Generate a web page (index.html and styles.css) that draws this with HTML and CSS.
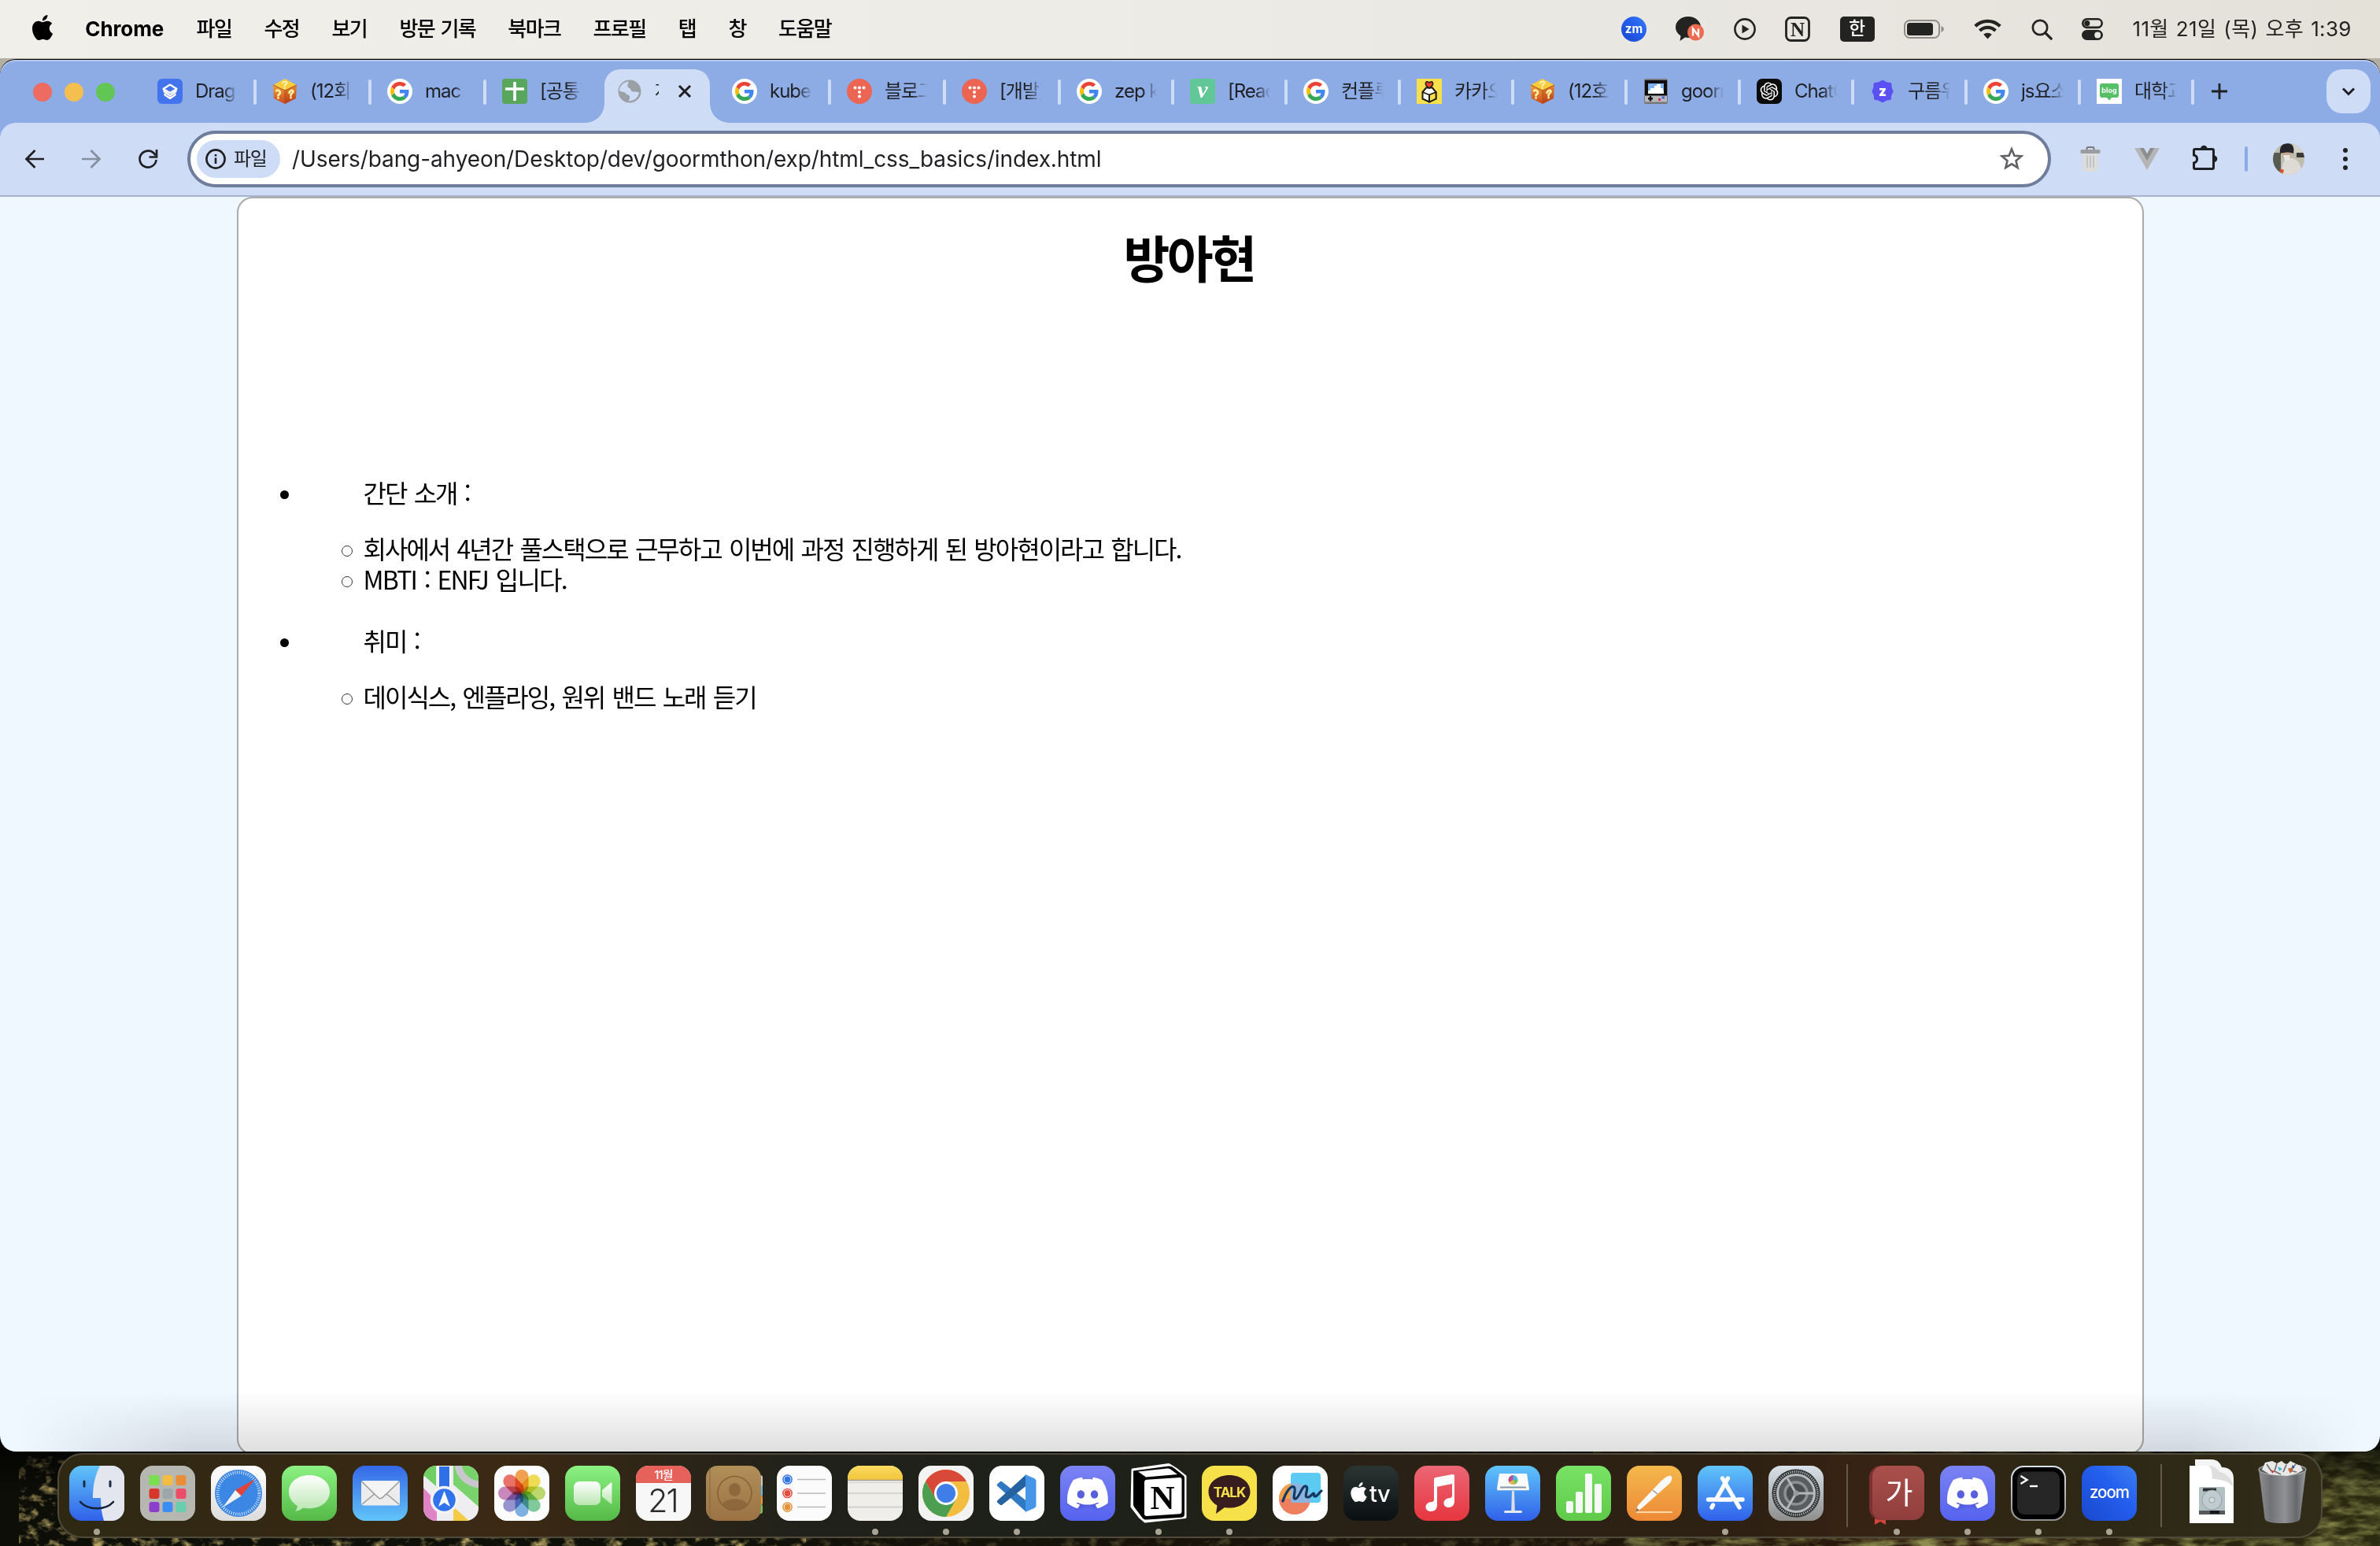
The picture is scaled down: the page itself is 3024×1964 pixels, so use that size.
FILE: index.html
```html
<!DOCTYPE html>
<html lang="ko">
<head>
<meta charset="utf-8">
<title>방아현</title>
<link rel="stylesheet" href="styles.css">
</head>
<body>
<svg class="defs" width="0" height="0" aria-hidden="true">
  <defs>
    <symbol id="apple" viewBox="0 0 24 24"><path d="M12.152 6.896c-.948 0-2.415-1.078-3.96-1.04-2.04.027-3.91 1.183-4.961 3.014-2.117 3.675-.546 9.103 1.519 12.09 1.013 1.454 2.208 3.09 3.792 3.039 1.52-.065 2.09-.987 3.935-.987 1.831 0 2.35.987 3.96.948 1.637-.026 2.676-1.48 3.676-2.948 1.156-1.688 1.636-3.325 1.662-3.415-.039-.013-3.182-1.221-3.22-4.857-.026-3.04 2.48-4.494 2.597-4.559-1.429-2.09-3.623-2.324-4.39-2.376-2-.156-3.675 1.09-4.61 1.09zM15.53 3.83c.843-1.012 1.4-2.427 1.245-3.83-1.207.052-2.662.805-3.532 1.818-.78.896-1.454 2.338-1.273 3.714 1.338.104 2.715-.688 3.559-1.701"/></symbol>
    <symbol id="google" viewBox="0 0 32 32">
      <circle cx="16" cy="16" r="16" fill="#fff"/>
      <g transform="translate(4 4) scale(.5)">
        <path fill="#EA4335" d="M24 9.5c3.54 0 6.71 1.22 9.21 3.6l6.85-6.85C35.9 2.38 30.47 0 24 0 14.62 0 6.51 5.38 2.56 13.22l7.98 6.19C12.43 13.72 17.74 9.5 24 9.5z"/>
        <path fill="#4285F4" d="M46.98 24.55c0-1.57-.15-3.09-.38-4.55H24v9.02h12.94c-.58 2.96-2.26 5.48-4.78 7.18l7.73 6c4.51-4.18 7.09-10.36 7.09-17.65z"/>
        <path fill="#FBBC05" d="M10.53 28.59c-.48-1.45-.76-2.99-.76-4.59s.27-3.14.76-4.59l-7.98-6.19C.92 16.46 0 20.12 0 24c0 3.88.92 7.54 2.56 10.78l7.97-6.19z"/>
        <path fill="#34A853" d="M24 48c6.48 0 11.93-2.13 15.89-5.81l-7.73-6c-2.15 1.45-4.92 2.3-8.16 2.3-6.26 0-11.57-4.22-13.47-9.91l-7.98 6.19C6.51 42.62 14.62 48 24 48z"/>
      </g>
    </symbol>
    <linearGradient id="gCubeL" x1="0" y1="0" x2="0" y2="1"><stop offset="0" stop-color="#f3a23a"/><stop offset="1" stop-color="#c9471c"/></linearGradient>
    <linearGradient id="gCubeR" x1="0" y1="0" x2="0" y2="1"><stop offset="0" stop-color="#e98530"/><stop offset="1" stop-color="#b63a16"/></linearGradient>
    <symbol id="cube" viewBox="0 0 32 32">
      <path d="M16 0 31 8 16 15 1 8z" fill="#f9cb3d"/>
      <path d="M1 8 16 15V32L2 25z" fill="url(#gCubeL)"/>
      <path d="M31 8 16 15V32L30 25z" fill="url(#gCubeR)"/>
      <path d="M1 8 16 15 31 8M16 15V31" stroke="#a8521c" stroke-width="1" fill="none"/>
      <path d="M13 5.500c1-2.500 6-2.500 5.500 0-.5 1.700-2.800 1.600-2.800 3.500M15.500 11.500v.5" stroke="#fff8c0" stroke-width="1.900" fill="none" stroke-linecap="round"/>
      <path d="M5 15.500c1.500-2 5-.5 5 2.300 0 2-2.500 1.500-2.500 3.700M7.500 24.300v.5M21.500 18c.5-3 5-4.500 5-1.800 0 2-3 2.500-3 5M23.500 23.800v.5" stroke="#fff6a8" stroke-width="2.600" fill="none" stroke-linecap="round"/>
    </symbol>
    <symbol id="tdots" viewBox="0 0 32 32">
      <circle cx="16" cy="16" r="16" fill="#ec6552"/>
      <g fill="#fff"><circle cx="10.500" cy="11.500" r="2"/><circle cx="16" cy="11.500" r="2"/><circle cx="21.500" cy="11.500" r="2"/><circle cx="16" cy="17" r="2"/><circle cx="16" cy="22.500" r="2"/></g>
    </symbol>
    <linearGradient id="gDiscord" x1="0" y1="0" x2="0" y2="1"><stop offset="0" stop-color="#7b83f3"/><stop offset="1" stop-color="#5562ee"/></linearGradient>
    <symbol id="discord" viewBox="0 0 70 70">
      <rect width="70" height="70" rx="16" fill="url(#gDiscord)"/>
      <path transform="translate(9 10.500) scale(2.160 2.050)" fill="#3a41b8" opacity=".35" d="M4 4.500 20 4.500 24 18.500 18 22 12 20 6 22 0 18.500z" filter="url(#soft)"/>
      <path transform="translate(9 8.500) scale(2.160)" fill="#fff" d="M20.317 4.3698a19.7913 19.7913 0 00-4.8851-1.5152.0741.0741 0 00-.0785.0371c-.211.3753-.4447.8648-.6083 1.2495-1.8447-.2762-3.68-.2762-5.4868 0-.1636-.3933-.4058-.8742-.6177-1.2495a.077.077 0 00-.0785-.037 19.7363 19.7363 0 00-4.8852 1.515.0699.0699 0 00-.0321.0277C.5334 9.0458-.319 13.5799.0992 18.0578a.0824.0824 0 00.0312.0561c2.0528 1.5076 4.0413 2.4228 5.9929 3.0294a.0777.0777 0 00.0842-.0276c.4616-.6304.8731-1.2952 1.226-1.9942a.076.076 0 00-.0416-.1057c-.6528-.2476-1.2743-.5495-1.8722-.8923a.077.077 0 01-.0076-.1277c.1258-.0943.2517-.1923.3718-.2914a.0743.0743 0 01.0776-.0105c3.9278 1.7933 8.18 1.7933 12.0614 0a.0739.0739 0 01.0785.0095c.1202.099.246.1981.3728.2924a.077.077 0 01-.0066.1276 12.2986 12.2986 0 01-1.873.8914.0766.0766 0 00-.0407.1067c.3604.698.7719 1.3628 1.225 1.9932a.076.076 0 00.0842.0286c1.961-.6067 3.9495-1.5219 6.0023-3.0294a.077.077 0 00.0313-.0552c.5004-5.177-.8382-9.6739-3.5485-13.6604a.061.061 0 00-.0312-.0286zM8.02 15.3312c-1.1825 0-2.1569-1.0857-2.1569-2.419 0-1.3332.9555-2.4189 2.157-2.4189 1.2108 0 2.1757 1.0952 2.1568 2.419 0 1.3332-.9555 2.4189-2.1569 2.4189zm7.9748 0c-1.1825 0-2.1569-1.0857-2.1569-2.419 0-1.3332.9554-2.4189 2.1569-2.4189 1.2108 0 2.1757 1.0952 2.1568 2.419 0 1.3332-.946 2.4189-2.1568 2.4189Z"/>
    </symbol>
    <filter id="soft" x="-20%" y="-20%" width="140%" height="140%"><feGaussianBlur stdDeviation=".8"/></filter>
    <filter id="foliage" x="0" y="0" width="100%" height="100%">
      <feTurbulence type="fractalNoise" baseFrequency=".06 .09" numOctaves="5" seed="8"/>
      <feColorMatrix values="0 0 0 0 .46  0 0 0 0 .36  0 0 0 0 .12  2.600 1.200 0 0 -1.900"/>
    </filter>
    <filter id="grass" x="0" y="0" width="100%" height="100%">
      <feTurbulence type="fractalNoise" baseFrequency=".03 .09" numOctaves="5" seed="21"/>
      <feColorMatrix values="0 0 0 0 .34  0 0 0 0 .35  0 0 0 0 .1  1.800 1.200 0 0 -1.200"/>
    </filter>
    <linearGradient id="gBlueV" x1="0" y1="0" x2="0" y2="1"><stop offset="0" stop-color="#61c5f9"/><stop offset="1" stop-color="#2f60ea"/></linearGradient>
    <linearGradient id="gMail" x1="0" y1="0" x2="0" y2="1"><stop offset="0" stop-color="#3568e8"/><stop offset="1" stop-color="#62c4f8"/></linearGradient>
    <linearGradient id="gGreen" x1="0" y1="0" x2="0" y2="1"><stop offset="0" stop-color="#8bf283"/><stop offset="1" stop-color="#54b946"/></linearGradient>
    <linearGradient id="gWhite" x1="0" y1="0" x2="0" y2="1"><stop offset="0" stop-color="#fff"/><stop offset="1" stop-color="#dcdcdc"/></linearGradient>
    <linearGradient id="gBubble" x1="0" y1="0" x2="0" y2="1"><stop offset="0" stop-color="#fff"/><stop offset="1" stop-color="#b9e6b0"/></linearGradient>
    <linearGradient id="gRed" x1="0" y1="0" x2="0" y2="1"><stop offset="0" stop-color="#ec6675"/><stop offset="1" stop-color="#e6363f"/></linearGradient>
    <linearGradient id="gOrange" x1="0" y1="0" x2="0" y2="1"><stop offset="0" stop-color="#f4b84c"/><stop offset="1" stop-color="#ed8936"/></linearGradient>
    <linearGradient id="gTv" x1="0" y1="0" x2="0" y2="1"><stop offset="0" stop-color="#2a3532"/><stop offset="1" stop-color="#0a0f12"/></linearGradient>
    <linearGradient id="gGrey" x1="0" y1="0" x2="0" y2="1"><stop offset="0" stop-color="#d9e2e9"/><stop offset="1" stop-color="#8e8e8c"/></linearGradient>
    <linearGradient id="gNotes" x1="0" y1="0" x2="0" y2="1"><stop offset="0" stop-color="#fadb5f"/><stop offset="1" stop-color="#f3c33b"/></linearGradient>
    <linearGradient id="gBrown" x1="0" y1="0" x2="0" y2="1"><stop offset="0" stop-color="#b08f58"/><stop offset="1" stop-color="#9c7245"/></linearGradient>
    <linearGradient id="gZoom" x1="1" y1="0" x2="0" y2="1"><stop offset="0" stop-color="#3c80f0"/><stop offset=".4" stop-color="#2460ef"/><stop offset="1" stop-color="#1a47cc"/></linearGradient>
    <linearGradient id="gDict" x1="0" y1="0" x2="0" y2="1"><stop offset="0" stop-color="#a9504c"/><stop offset="1" stop-color="#903e3d"/></linearGradient>
    <linearGradient id="gBin" x1="0" y1="0" x2="1" y2="0"><stop offset="0" stop-color="#8c8e91"/><stop offset=".25" stop-color="#707275"/><stop offset=".55" stop-color="#8f9194"/><stop offset=".8" stop-color="#66686b"/><stop offset="1" stop-color="#9b9da0"/></linearGradient>
    <clipPath id="tile"><rect width="70" height="70" rx="16"/></clipPath>
  </defs>
</svg>

<div class="desktop">
  <svg class="wallpaper" viewBox="0 0 3024 164" width="3024" height="164" aria-hidden="true">
    <defs>
      <linearGradient id="ground" x1="0" x2="1"><stop offset="0" stop-color="#0d0e08"/><stop offset=".25" stop-color="#0f1109"/><stop offset=".6" stop-color="#1b140b"/><stop offset=".82" stop-color="#2d1b0e"/><stop offset="1" stop-color="#2a2b11"/></linearGradient>
      <linearGradient id="fade" x1="0" y1="0" x2="0" y2="1"><stop offset="0" stop-color="#000"/><stop offset=".27" stop-color="#000" stop-opacity=".85"/><stop offset="1" stop-color="#000" stop-opacity="0"/></linearGradient>
    </defs>
    <rect width="3024" height="164" fill="url(#ground)"/>
    <rect x="24" y="50" width="1000" height="114" filter="url(#foliage)"/>
    <rect x="1024" width="1000" height="164" filter="url(#foliage)" opacity=".3"/>
    <rect x="2024" width="1000" height="164" filter="url(#grass)" opacity=".85"/>
    <rect width="3024" height="100" fill="url(#fade)"/>
  </svg>

  <header class="menubar">
    <nav class="menus">
      <svg class="apple-logo"><use href="#apple"/></svg>
      <span class="app-name">Chrome</span>
      <span>파일</span><span>수정</span><span>보기</span><span>방문 기록</span><span>북마크</span><span>프로필</span><span>탭</span><span>창</span><span>도움말</span>
    </nav>
    <div class="status">
      <svg width="32" height="32" viewBox="0 0 32 32"><circle cx="16" cy="16" r="16" fill="url(#gZoom)"/><text x="16" y="20.500" text-anchor="middle" class="t-zm">zm</text></svg>
      <svg width="36" height="32" viewBox="0 0 36 32"><path d="M16 0C7 0 0 6 0 13.500 0 18 2.500 22 6.500 24.500L5.500 31l6.500-4.500c1.300.3 2.600.4 4 .4 9 0 16-6 16-13.400S25 0 16 0z" fill="#232321"/><circle cx="25.500" cy="20" r="10.500" fill="#ec6a50"/><path d="M22 24.500v-9l7 9v-9" fill="none" stroke="#fff" stroke-width="2.400"/></svg>
      <svg width="28" height="28" viewBox="0 0 28 28"><circle cx="14" cy="14" r="12.600" fill="none" stroke="#232321" stroke-width="2.600"/><path d="M10.500 8.500v11l9-5.500z" fill="#232321"/></svg>
      <svg width="32" height="32" viewBox="0 0 32 32"><rect x="1.500" y="1.500" width="29" height="29" rx="6" fill="none" stroke="#232321" stroke-width="2.800"/><text x="16" y="24.500" text-anchor="middle" class="t-n">N</text></svg>
      <span class="ime">한</span>
      <svg width="52" height="24" viewBox="0 0 52 24"><rect x="1" y="1" width="44" height="22" rx="6.500" fill="none" stroke="#8d8c88" stroke-width="2"/><rect x="4" y="4" width="33" height="16" rx="3.500" fill="#232321"/><path d="M47.500 8v8c2-.8 3.300-2.200 3.300-4s-1.300-3.200-3.300-4z" fill="#8d8c88"/></svg>
      <svg width="35" height="26" viewBox="0 0 35 26"><g fill="none" stroke="#232321" stroke-width="4.200"><path d="M1.800 9.300a22.300 22.300 0 0 1 31.400 0"/><path d="M7.500 15a14.300 14.300 0 0 1 20 0"/></g><path d="M17.500 25.500l-5.300-5.700a7.600 7.600 0 0 1 10.600 0z" fill="#232321"/></svg>
      <svg width="27" height="27" viewBox="0 0 27 27"><circle cx="11" cy="11" r="9.200" fill="none" stroke="#232321" stroke-width="2.700"/><path d="M17.800 17.800l7.400 7.400" stroke="#232321" stroke-width="3.300" stroke-linecap="round"/></svg>
      <svg width="27" height="28" viewBox="0 0 27 28"><rect x="1.300" y="1.300" width="24.400" height="10.600" rx="5.300" fill="none" stroke="#232321" stroke-width="2.600"/><circle cx="6.800" cy="6.600" r="3.600" fill="#232321"/><rect y="15" width="27" height="13" rx="6.500" fill="#232321"/><circle cx="20.200" cy="21.500" r="4" fill="#e7e5df"/></svg>
      <span class="clock">11월 21일 (목) 오후 1:39</span>
    </div>
  </header>

  <section class="window">
    <div class="tabstrip">
      <div class="lights"><i class="red"></i><i class="yellow"></i><i class="green"></i></div>
      <div class="tab wide"><svg viewBox="0 0 32 32"><rect width="32" height="32" rx="6" fill="#4474ed"/><path d="M8.500 11.500v4.500l7.500 5.500 7.500-5.500v-4.500" fill="none" stroke="#fff" stroke-width="2.200" stroke-linejoin="round"/><path d="M16 7.500l8.500 5.500-8.500 5-8.500-5zM9.500 18.500v2l6.500 4.500 6.500-4.500v-2" fill="none" stroke="#fff" stroke-width="2.200" stroke-linejoin="round"/></svg><span>Drag</span></div>
      <div class="tab wide"><svg><use href="#cube"/></svg><span>(12회</span></div>
      <div class="tab wide"><svg><use href="#google"/></svg><span>mac</span></div>
      <div class="tab wide last"><svg viewBox="0 0 32 32"><rect width="32" height="32" rx="4" fill="#58a55c"/><path d="M16 4v24M4 13h24" stroke="#fff" stroke-width="3.600"/></svg><span>[공통]</span></div>
      <div class="tab wide active">
        <svg class="globe" viewBox="0 0 30 30"><circle cx="15" cy="15" r="14.500" fill="#9aa0a6"/><path d="M14 2.500c-1 3-2 4-1.500 6.500.5 2 3.500 1.500 4 4 .3 2 2 2.500 4 2.500 2.500 0 5 1 6.500.5-.5 4-3 8-6 9.500-3 1.500-6 2-7.500 1.500 1-2 2-3 1.500-5.500s-3.500-1.500-4.500-3.500-3.500-2-5.500-2.500l-3-1C2 10 5 3.500 14 2.500z" fill="#cfdcf5"/><path d="M17 1.500c4 .5 9 4 10.500 9-2 1.500-5 2-7 1s-1-3-2.500-4.500S16 4 17 1.500z" fill="#9aa0a6"/></svg>
        <span>자기</span>
        <svg class="close" viewBox="0 0 18 18"><path d="M2 2l14 14M16 2L2 16" stroke="#1f2023" stroke-width="3"/></svg>
      </div>
      <div class="tab wide"><svg><use href="#google"/></svg><span>kube</span></div>
      <div class="tab wide"><svg><use href="#tdots"/></svg><span>블로그</span></div>
      <div class="tab wide"><svg><use href="#tdots"/></svg><span>[개발]</span></div>
      <div class="tab"><svg><use href="#google"/></svg><span>zep ki</span></div>
      <div class="tab"><svg viewBox="0 0 32 32"><rect width="32" height="32" rx="4" fill="#62c797"/><text x="16" y="24" text-anchor="middle" class="t-v">v</text></svg><span>[Reac</span></div>
      <div class="tab"><svg><use href="#google"/></svg><span>컨플루</span></div>
      <div class="tab"><svg viewBox="0 0 32 32"><rect width="32" height="32" fill="#f7e04b"/><path d="M7.500 17 12 11.500h8L24.500 17v8.500L16 29.500l-8.500-4z" fill="#fff" stroke="#1d1a12" stroke-width="2"/><path d="M16 20.500l8.500-3.500v8.500l-8.500 4z" fill="#f7e04b" stroke="#1d1a12" stroke-width="1.800"/><path d="M7.500 17l8.500 3.500v9" fill="none" stroke="#1d1a12" stroke-width="1.800"/><path d="M16 12c-8-5-4-11 0-7 4-4 8 2 0 7z" fill="#e8452c" stroke="#1d1a12" stroke-width="1.500"/></svg><span>카카오</span></div>
      <div class="tab"><svg><use href="#cube"/></svg><span>(12호</span></div>
      <div class="tab"><svg viewBox="0 0 32 32"><rect x="1" y="0" width="30" height="32" rx="2" fill="#77777a"/><rect x="2" y="2" width="28" height="23" fill="#0d0d0f"/><rect x="6" y="6" width="20" height="13" fill="#7db3f5"/><path d="M6 19v-4h3v-3h5V9h3V7h5v5h3v3h1v4z" fill="#fff"/><rect x="2" y="21.500" width="28" height="8" fill="#b8b8bb"/><path d="M9 22v6.500M6 25.200h6" stroke="#111" stroke-width="2.400"/><rect x="19" y="25" width="3" height="3" fill="#d0306a"/><rect x="23.500" y="22.500" width="3.500" height="3" fill="#4668d8"/></svg><span>goorm</span></div>
      <div class="tab"><svg viewBox="0 0 32 32"><rect width="32" height="32" rx="7" fill="#0b0b0b"/><path transform="translate(4.600 4.600) scale(.95)" fill="#fff" d="M22.2819 9.8211a5.9847 5.9847 0 0 0-.5157-4.9108 6.0462 6.0462 0 0 0-6.5098-2.9A6.0651 6.0651 0 0 0 4.9807 4.1818a5.9847 5.9847 0 0 0-3.9977 2.9 6.0462 6.0462 0 0 0 .7427 7.0966 5.98 5.98 0 0 0 .511 4.9107 6.051 6.051 0 0 0 6.5146 2.9001A5.9847 5.9847 0 0 0 13.2599 24a6.0557 6.0557 0 0 0 5.7718-4.2058 5.9894 5.9894 0 0 0 3.9977-2.9001 6.0557 6.0557 0 0 0-.7475-7.0729zm-9.022 12.6081a4.4755 4.4755 0 0 1-2.8764-1.0408l.1419-.0804 4.7783-2.7582a.7948.7948 0 0 0 .3927-.6813v-6.7369l2.02 1.1686a.071.071 0 0 1 .038.052v5.5826a4.504 4.504 0 0 1-4.4945 4.4944zm-9.6607-4.1254a4.4708 4.4708 0 0 1-.5346-3.0137l.142.0852 4.783 2.7582a.7712.7712 0 0 0 .7806 0l5.8428-3.3685v2.3324a.0804.0804 0 0 1-.0332.0615L9.74 19.9502a4.4992 4.4992 0 0 1-6.1408-1.6464zM2.3408 7.8956a4.485 4.485 0 0 1 2.3655-1.9728V11.6a.7664.7664 0 0 0 .3879.6765l5.8144 3.3543-2.0201 1.1685a.0757.0757 0 0 1-.071 0l-4.8303-2.7865A4.504 4.504 0 0 1 2.3408 7.872zm16.5963 3.8558L13.1038 8.364 15.1192 7.2a.0757.0757 0 0 1 .071 0l4.8303 2.7913a4.4944 4.4944 0 0 1-.6765 8.1042v-5.6772a.79.79 0 0 0-.407-.667zm2.0107-3.0231l-.142-.0852-4.7735-2.7818a.7759.7759 0 0 0-.7854 0L9.409 9.2297V6.8974a.0662.0662 0 0 1 .0284-.0615l4.8303-2.7866a4.4992 4.4992 0 0 1 6.6802 4.66zM8.3065 12.863l-2.02-1.1638a.0804.0804 0 0 1-.038-.0567V6.0742a4.4992 4.4992 0 0 1 7.3757-3.4537l-.142.0805L8.704 5.459a.7948.7948 0 0 0-.3927.6813zm1.0976-2.3654l2.602-1.4998 2.6069 1.4998v2.9994l-2.5974 1.4997-2.6067-1.4997Z"/></svg><span>ChatG</span></div>
      <div class="tab"><svg viewBox="0 0 32 32"><path d="M16 2.500l5 2.500 5.500 1 .5 5.500 1.800 5-2.300 4.500-.5 5-5.500 1L16 29.500 11 27l-5-1-.5-5L3.200 16.500 5 11.500 5.500 6 11 5z" fill="#5b50f2" stroke="#5b50f2" stroke-width="1.500" stroke-linejoin="round"/><text x="16" y="21.500" text-anchor="middle" class="t-z">z</text></svg><span>구름위</span></div>
      <div class="tab"><svg><use href="#google"/></svg><span>js요소</span></div>
      <div class="tab"><svg viewBox="0 0 32 32"><rect width="32" height="32" fill="#fff"/><rect x="4" y="6" width="24" height="18" rx="3" fill="#57bf66"/><path d="M12 23h8l-4 4.500z" fill="#57bf66"/><text x="16" y="18" text-anchor="middle" class="t-blog">blog</text></svg><span>대학교</span></div>
      <svg class="plus" viewBox="0 0 20 20"><path d="M10 0v20M0 10h20" stroke="#1f2023" stroke-width="2.800"/></svg>
      <span class="tab-search"><svg width="16" height="11" viewBox="0 0 16 11"><path d="M1 1.500l7 7 7-7" fill="none" stroke="#1f2023" stroke-width="3"/></svg></span>
    </div>

    <div class="toolbar">
      <svg class="ic-back" width="26" height="26" viewBox="0 0 26 26"><path d="M25 13H3M13.500 2L2.500 13l11 11" fill="none" stroke="#1f2023" stroke-width="2.700"/></svg>
      <svg class="ic-fwd" width="26" height="26" viewBox="0 0 26 26"><path d="M1 13h22M12.500 2l11 11-11 11" fill="none" stroke="#868e9f" stroke-width="2.700"/></svg>
      <svg class="ic-reload" width="26" height="26" viewBox="0 0 26 26"><path d="M22.500 8.500A10.500 10.500 0 1 0 23.500 14" fill="none" stroke="#1f2023" stroke-width="2.700"/><path d="M24 1v9.500h-9.500" fill="none" stroke="#1f2023" stroke-width="2.700"/></svg>
      <div class="omnibox">
        <span class="chip"><svg width="26" height="26" viewBox="0 0 26 26"><circle cx="13" cy="13" r="11.600" fill="none" stroke="#1f2023" stroke-width="2.600"/><path d="M13 11.500v7.500M13 7v2.600" stroke="#1f2023" stroke-width="2.600"/></svg>파일</span>
        <span class="url">/Users/bang-ahyeon/Desktop/dev/goormthon/exp/html_css_basics/index.html</span>
        <svg class="star" width="32" height="32" viewBox="0 0 32 32"><path d="M16 3.500l3.400 8.200 8.900.7-6.800 5.800 2.100 8.700L16 22.300l-7.600 4.600 2.100-8.700-6.800-5.800 8.900-.7z" fill="none" stroke="#5f6063" stroke-width="2.600"/></svg>
      </div>
      <div class="extensions">
        <svg width="28" height="32" viewBox="0 0 28 32"><path d="M9.500 5V2.500C9.500 1.500 10 1 11 1h6c1 0 1.500.5 1.500 1.500V5" fill="none" stroke="#77797c" stroke-width="2"/><rect x="1.500" y="4" width="25" height="5" rx="1.500" fill="#9c9da0"/><path d="M4 9h20l-1 21c0 1.200-.8 2-2 2H7c-1.200 0-2-.8-2-2z" fill="#dcdcdc"/><path d="M10 12v15M14 12v15M18 12v15" stroke="#bdbdbd" stroke-width="1.500"/></svg>
        <svg class="ext-v" width="32" height="28" viewBox="0 0 32 28"><path d="M0 0h6.500L16 16.500 25.500 0H32L16 28z" fill="#b5b5b5"/><path d="M6.500 0H12l4 7 4-7h5.500L16 16.500z" fill="#8e8e8e"/></svg>
        <svg class="ext-puzzle" width="34" height="34" viewBox="0 0 34 34"><path d="M3.500 8c0-1 .7-1.500 1.500-1.500h22c1 0 1.500.6 1.500 1.500v22c0 1-.6 1.500-1.500 1.500H5c-.9 0-1.500-.6-1.500-1.500v-6c5.500-1.500 5.500-8.500 0-10z" fill="none" stroke="#1f2023" stroke-width="3"/><path d="M12 6a4.300 4.300 0 0 1 8.600 0zM29 14.500a4.300 4.300 0 0 1 0 8.600z" fill="#1f2023"/></svg>
        <i class="divider"></i>
        <svg class="avatar" width="40" height="40" viewBox="0 0 40 40"><defs><clipPath id="av"><circle cx="20" cy="20" r="20"/></clipPath></defs><g clip-path="url(#av)"><rect width="40" height="40" fill="#bfbdb0"/><rect y="12" width="10" height="28" fill="#565a50"/><rect x="26" width="14" height="12" fill="#d3d2c8"/><path d="M30 12h10v6H30z" fill="#3a3b38"/><path d="M12 40c-2-10 0-18 8-21 9-2 17 6 16 21z" fill="#dedbd6"/><ellipse cx="17.500" cy="15" rx="5.500" ry="7" fill="#c9a78e"/><path d="M9 13C8 4 12 0 18 0c6 0 10 4 8 13-5-2-9-2-17 0z" fill="#25242b"/><path d="M13 15l9 0-1 7-6 0z" fill="#e6e5e1"/><path d="M9 32l5 2-2 6H8z" fill="#d2552c"/></g></svg>
        <svg class="dots" width="6" height="28" viewBox="0 0 6 28"><g fill="#1f2023"><circle cx="3" cy="3" r="3"/><circle cx="3" cy="14" r="3"/><circle cx="3" cy="25" r="3"/></g></svg>
      </div>
    </div>

    <main class="page">
      <article class="card">
        <h1>방아현</h1>
        <ul class="outer">
          <li>
            <p>간단 소개 :</p>
            <ul class="inner">
              <li>회사에서 4년간 풀스택으로 근무하고 이번에 과정 진행하게 된 방아현이라고 합니다.</li>
              <li class="mbti">MBTI : ENFJ 입니다.</li>
            </ul>
          </li>
          <li>
            <p>취미 :</p>
            <ul class="inner">
              <li>데이식스, 엔플라잉, 원위 밴드 노래 듣기</li>
            </ul>
          </li>
        </ul>
      </article>
      <div class="dock-shade"></div>
    </main>
  </section>

  <footer class="dock">
    <div class="app on"><svg viewBox="0 0 70 70"><g clip-path="url(#tile)"><rect width="70" height="70" fill="url(#gBlueV)"/><path d="M39 0C32 14 30 26 30 41h10c0 10 1 20 4 29h26V0z" fill="#e3e6ee"/><path d="M19 20v6M52 20v6" stroke="#1b2b46" stroke-width="3" stroke-linecap="round"/><path d="M14 46c10 11 32 11 42 0" fill="none" stroke="#142038" stroke-width="2.600" stroke-linecap="round"/></g></svg></div>
    <div class="app"><svg viewBox="0 0 70 70"><rect width="70" height="70" rx="16" fill="#b7b7b2"/><g><rect x="11.500" y="12" width="13" height="13" rx="3" fill="#7ade4e"/><rect x="28.500" y="12" width="13" height="13" rx="3" fill="#f4bd41"/><rect x="45.500" y="12" width="13" height="13" rx="3" fill="#ea8d36"/><rect x="11.500" y="29" width="13" height="13" rx="3" fill="#d6362c"/><rect x="28.500" y="29" width="13" height="13" rx="3" fill="#9da6a9"/><rect x="45.500" y="29" width="13" height="13" rx="3" fill="#ec4d67"/><rect x="11.500" y="46" width="13" height="13" rx="3" fill="#8c3fcd"/><rect x="28.500" y="46" width="13" height="13" rx="3" fill="#3b8df3"/><rect x="45.500" y="46" width="13" height="13" rx="3" fill="#67cfae"/></g></svg></div>
    <div class="app"><svg viewBox="0 0 70 70"><rect width="70" height="70" rx="16" fill="url(#gWhite)"/><circle cx="35" cy="35" r="30" fill="#3c86e4"/><circle cx="35" cy="35" r="26.500" fill="none" stroke="#cfe3fa" stroke-width="4" stroke-dasharray="1 1.775"/><path d="M56 17 38.500 38.500 31 31z" fill="#e0433a"/><path d="M15 53 31 31l7.500 7.500z" fill="#f2f2f2"/></svg></div>
    <div class="app"><svg viewBox="0 0 70 70"><rect width="70" height="70" rx="16" fill="url(#gGreen)"/><path d="M35 12c-15 0-26 9-26 21 0 7.500 4 14 11 18-.4 3-1.500 5-3 7 4-.6 7.500-2.200 10-4.500 2.500.6 5 .8 8 .8 15 0 26-9.300 26-21.300S50 12 35 12z" fill="url(#gBubble)"/></svg></div>
    <div class="app"><svg viewBox="0 0 70 70"><rect width="70" height="70" rx="16" fill="url(#gMail)"/><rect x="11" y="19" width="49" height="31.500" rx="3" fill="#ececec"/><path d="M12 49 30 34M59 49 41 34" stroke="#9c9c9c" stroke-width="1.600"/><path d="M12 20.500 32 40c2 2 4.500 2 6.500 0L59 20.500" fill="#f5f5f5" stroke="#9c9c9c" stroke-width="1.700"/></svg></div>
    <div class="app"><svg viewBox="0 0 70 70"><g clip-path="url(#tile)"><rect width="70" height="70" fill="#eeeef0"/><path d="M0 12V0h16v26z" fill="#6fcf62"/><path d="M38 0h32v52L38 24z" fill="#79d26b"/><path d="M0 28 17 46v24H0z" fill="#dd83c6"/><path d="M38 70V52l20 18z" fill="#f4cb45"/><path d="M44-4c0 15 12 28 30 28" fill="none" stroke="#c7c7cd" stroke-width="9"/><path d="M19 0h15v40H19z" fill="#2f6fe8" stroke="#fff" stroke-width="2"/><circle cx="26.500" cy="43.500" r="16" fill="#3173ec" stroke="#f3f3f5" stroke-width="3.500"/><path d="M26.500 32 34 52l-7.500-5-7.500 5z" fill="#fff"/></g></svg></div>
    <div class="app"><svg viewBox="0 0 70 70"><rect width="70" height="70" rx="16" fill="#fcfcfc"/><g class="petals"><rect x="26.500" y="5" width="17" height="30" rx="8.500" fill="#f3973a"/><rect x="26.500" y="5" width="17" height="30" rx="8.500" fill="#efdc3c" transform="rotate(45 35 35)"/><rect x="26.500" y="5" width="17" height="30" rx="8.500" fill="#b5d65a" transform="rotate(90 35 35)"/><rect x="26.500" y="5" width="17" height="30" rx="8.500" fill="#6fc58e" transform="rotate(135 35 35)"/><rect x="26.500" y="5" width="17" height="30" rx="8.500" fill="#6aa7df" transform="rotate(180 35 35)"/><rect x="26.500" y="5" width="17" height="30" rx="8.500" fill="#8a86cb" transform="rotate(225 35 35)"/><rect x="26.500" y="5" width="17" height="30" rx="8.500" fill="#c47ab4" transform="rotate(270 35 35)"/><rect x="26.500" y="5" width="17" height="30" rx="8.500" fill="#ea5f55" transform="rotate(315 35 35)"/></g></svg></div>
    <div class="app"><svg viewBox="0 0 70 70"><rect width="70" height="70" rx="16" fill="url(#gGreen)"/><rect x="11" y="20" width="34" height="30" rx="7" fill="url(#gBubble)"/><path d="M47 31 57.500 22c1-.8 2-.5 2 1v24c0 1.500-1 1.800-2 1L47 39z" fill="url(#gBubble)"/></svg></div>
    <div class="app"><svg viewBox="0 0 70 70"><g clip-path="url(#tile)"><rect width="70" height="70" fill="#f7f7f7"/><rect width="70" height="22" fill="#e5615a"/></g><text x="35" y="16.500" text-anchor="middle" class="t-month">11월</text><text x="34" y="59" text-anchor="middle" class="t-day">21</text></svg></div>
    <div class="app"><svg viewBox="0 0 70 70"><rect x="60" y="12" width="12" height="16" rx="3" fill="#c9c9c9"/><rect x="60" y="25" width="12" height="14" rx="2" fill="#5db9ef"/><rect x="60" y="38" width="12" height="12" rx="2" fill="#ee9436"/><rect x="60" y="49" width="12" height="12" rx="3" fill="#69cc62"/><rect width="70" height="70" rx="15" fill="url(#gBrown)"/><path d="M5 3v64" stroke="#8a6a3f" stroke-width="1.200"/><g fill="none" stroke="#846238" stroke-width="1.600"><circle cx="36.500" cy="35" r="21.500"/></g><ellipse cx="36.500" cy="30.500" rx="7.500" ry="8.500" fill="#8c683c"/><path d="M21 49c3-9 28-9 31 0-8 9.500-23 9.500-31 0z" fill="#8c683c"/></svg></div>
    <div class="app"><svg viewBox="0 0 70 70"><rect width="70" height="70" rx="16" fill="#fbfbfb"/><g stroke="#b9babd" stroke-width="1.400"><path d="M26 17.500h36M26 35h36M26 52.500h36"/></g><g fill="none" stroke-width="1.500"><circle cx="13.500" cy="17.500" r="5.600" stroke="#2f75ea"/><circle cx="13.500" cy="35" r="5.600" stroke="#e14c3d"/><circle cx="13.500" cy="52.500" r="5.600" stroke="#e6913a"/></g><circle cx="13.500" cy="17.500" r="3.900" fill="#2f75ea"/><circle cx="13.500" cy="35" r="3.900" fill="#e14c3d"/><circle cx="13.500" cy="52.500" r="3.900" fill="#e6913a"/></svg></div>
    <div class="app on"><svg viewBox="0 0 70 70"><g clip-path="url(#tile)"><rect width="70" height="70" fill="#efeeea"/><rect width="70" height="18" fill="url(#gNotes)"/><path d="M0 18.500h70" stroke="#a6a29a" stroke-width="1.400"/><path d="M0 21.500h70" stroke="#b4b1aa" stroke-width="1.200" stroke-dasharray="1.200 1.500"/><path d="M0 35h70M0 52.500h70" stroke="#cdcbc6" stroke-width="1.300"/></g></svg></div>
    <div class="app on"><svg viewBox="0 0 70 70"><rect width="70" height="70" rx="16" fill="#f3f3f3"/><circle cx="35" cy="35" r="30" fill="#f3bd42"/><path d="M35 20H61A30 30 0 0 0 9 20L22 42.500z" fill="#d9493a"/><path d="M9 20A30 30 0 0 0 35 65L48 42.500 35 50 22 42.500z" fill="#4c9f50"/><circle cx="35" cy="35" r="15" fill="#fff"/><circle cx="35" cy="35" r="12" fill="#3f7de8"/></svg></div>
    <div class="app on"><svg viewBox="0 0 70 70"><rect width="70" height="70" rx="16" fill="#fff"/><path d="M10.500 26c-1-1-1-2 0-3l3-2.600c1-.8 2-.8 3 0L47 44.500V59z" fill="#2f78c4"/><path d="M10.500 44c-1 1-1 2 0 3l3 2.600c1 .8 2 .8 3 0L47 25.500V11z" fill="#2562a0"/><path d="M46 11.300 57 16c1.500.8 2.500 2 2.500 3.500v31c0 1.500-1 2.700-2.500 3.500l-11 4.700z" fill="#4596e8"/></svg></div>
    <div class="app"><svg viewBox="0 0 70 70"><use href="#discord"/></svg></div>
    <div class="app on"><svg viewBox="0 0 70 70"><path d="M2 5 48-1.500 57 4l12 9.500V65.500L18 71 11 65 1 52z" fill="#fff" stroke="#fff" stroke-width="3" stroke-linejoin="round"/><path d="M3 6.500 48 .5c3 0 5 1.300 7 2.800L66 12c1.300 1 2 2 2 4v45c0 3-1 4.500-4 4.800L20 68.500c-2.500.2-4-.4-5.500-2.300L4.500 53c-1-1.400-1.500-2.400-1.500-4.500z" fill="#000"/><path d="M9 7.500 46 3.500c2 0 3 .2 4.500 1.200L59 11 19 14.500z" fill="#fff"/><path d="M17 21c0-2 1-3 3-3.200L62 15c1.600 0 2.500.8 2.500 2.500V58c0 2-1 3-3 3.200L20 64c-2 0-3-1-3-3z" fill="#fff"/><text x="40" y="55" text-anchor="middle" class="t-notion">N</text></svg></div>
    <div class="app on"><svg viewBox="0 0 70 70"><rect width="70" height="70" rx="16" fill="#f7e14b"/><path d="M35 12C20 12 8.500 21 8.500 33c0 8 4.500 13.500 11 17.500L18 61l11-8c2 .4 4 .6 6 .6 15 0 26.500-8.600 26.500-20.600S50 12 35 12z" fill="#371d1e"/><text x="35" y="39.500" text-anchor="middle" class="t-talk">TALK</text></svg></div>
    <div class="app"><svg viewBox="0 0 70 70"><rect width="70" height="70" rx="16" fill="#fff"/><circle cx="28" cy="42" r="20" fill="#ee7f5f"/><path d="M8 42a20 20 0 0 1 20-20v20z" fill="#f0a04a"/><rect x="23" y="9" width="38" height="38" rx="4" fill="#5ccbf3"/><path d="M23 23a20 20 0 0 1 25 24H27c-2.500 0-4-1.500-4-4z" fill="#8db4de"/><path d="M13 45c4-12 10-20 14-18s-3 16 2 15 8-17 13-16-3 14 2 14 6-5 8-5-1 4 2 4 4-4 8-7" fill="none" stroke="#143a63" stroke-width="3.200" stroke-linecap="round"/></svg></div>
    <div class="app"><svg viewBox="0 0 70 70"><rect width="70" height="70" rx="16" fill="url(#gTv)"/><svg x="7" y="20.500" width="25" height="26" fill="#fff"><use href="#apple"/></svg><text x="46" y="45.500" text-anchor="middle" class="t-tv">tv</text></svg></div>
    <div class="app"><svg viewBox="0 0 70 70"><rect width="70" height="70" rx="16" fill="url(#gRed)"/><path d="M25 17.500c0-1.500.6-2.200 2-2.500l21-4c2-.3 3 .4 3 2V45c0 5-3 8-7.500 8-4 0-6-2.500-6-5.500 0-3.500 2.500-5.500 6-6.200 2.600-.5 4.500-.8 4.500-3V23l-19 3.800V50c0 5-3 8-8 8-4 0-6.500-2.500-6.500-5.500 0-3.500 2.500-5.500 6-6.200 2.600-.5 4.500-.8 4.500-3z" fill="#fff"/></svg></div>
    <div class="app"><svg viewBox="0 0 70 70"><rect width="70" height="70" rx="16" fill="url(#gBlueV)"/><path d="M34 32h3l.8 26h-4.600z" fill="#dcdfe4"/><rect x="24" y="57" width="23" height="3" rx="1.500" fill="#e6e8ec"/><path d="M18 10h35l3 19c.2 1.500-.5 2.300-2 2.300H17c-1.500 0-2.200-.8-2-2.300z" fill="#fafafa"/><path d="M19 27.500h33" stroke="#8295a8" stroke-width="1.800"/><circle cx="35.500" cy="18" r="6" fill="#4bb5e8"/><path d="M35.500 18v-6a6 6 0 0 0-5 9z" fill="#c44b8e"/><path d="M35.500 18l-5 3a6 6 0 0 0 8 2z" fill="#f1b33e"/><path d="M35.500 18l3 5.200a6 6 0 0 0 3-5.200z" fill="#6bc35a"/></svg></div>
    <div class="app"><svg viewBox="0 0 70 70"><rect width="70" height="70" rx="16" fill="#69d64d"/><rect width="70" height="70" rx="16" fill="url(#gGreen)" opacity=".45"/><g fill="#f6f9f5"><rect x="13" y="45" width="9" height="15" rx="2"/><rect x="25" y="33" width="9" height="27" rx="2"/><rect x="37" y="10" width="9" height="50" rx="2"/><rect x="49" y="23" width="9" height="37" rx="2"/></g></svg></div>
    <div class="app"><svg viewBox="0 0 70 70"><rect width="70" height="70" rx="16" fill="url(#gOrange)"/><path d="M12 59h46" stroke="#fbd9a6" stroke-width="2.200"/><path d="M56 13c2 1 1.500 5-1 9L19 54l-8 5 3-8.500L44 19c4-3.500 9-7.500 12-6z" fill="#f8f8f8"/><path d="M33 31l6 5" stroke="#9a948c" stroke-width="1.500"/><path d="M11 59l1.800-5 2.800 2.300z" fill="#6d6258"/></svg></div>
    <div class="app on"><svg viewBox="0 0 70 70"><rect width="70" height="70" rx="16" fill="url(#gBlueV)"/><g stroke="#fff" stroke-width="5.400" stroke-linecap="round"><path d="M38.500 16 24.500 41M19.500 50l-1.500 3M31.500 16 53 53M13.500 43H43M51 43h6"/></g></svg></div>
    <div class="app"><svg viewBox="0 0 70 70"><rect width="70" height="70" rx="16" fill="url(#gGrey)"/><circle cx="35" cy="35" r="30.500" fill="#2e3132"/><circle cx="35" cy="35" r="27.500" fill="none" stroke="#a7aaac" stroke-width="3" stroke-dasharray="1.300 1.400"/><circle cx="35" cy="35" r="23.500" fill="#5a5d5f" stroke="#b9bcbe" stroke-width="3"/><circle cx="35" cy="35" r="14" fill="#4b4e50" stroke="#8e9193" stroke-width="3.500"/><path d="M35 35h22M35 35 24 16M35 35 24 54" stroke="#b4b7b9" stroke-width="3"/><circle cx="35" cy="35" r="3.500" fill="#989b9d"/></svg></div>
    <i class="rule first"></i>
    <div class="app on"><svg viewBox="0 0 70 70"><path d="M7 64h14v11l-7-4-7 4z" fill="#d2453c"/><rect width="70" height="69" rx="15" fill="#7c3030"/><rect x="4" width="66" height="69" rx="14" fill="url(#gDict)"/><text x="38" y="48" text-anchor="middle" class="t-ga">가</text></svg></div>
    <div class="app on"><svg viewBox="0 0 70 70"><use href="#discord"/></svg></div>
    <div class="app on"><svg viewBox="0 0 70 70"><rect width="70" height="70" rx="16" fill="url(#gGrey)"/><rect x="2" y="2" width="66" height="66" rx="14.500" fill="#000"/><rect x="8" y="7.500" width="54" height="54.500" rx="9" fill="#262626"/><path d="M12.500 13l8 5-8 5" fill="none" stroke="#fff" stroke-width="2.400"/><path d="M24 26h10" stroke="#fff" stroke-width="2.400"/></svg></div>
    <div class="app on"><svg viewBox="0 0 70 70"><rect width="70" height="70" rx="16" fill="url(#gZoom)"/><text x="35" y="40.500" text-anchor="middle" class="t-zoom">zoom</text></svg></div>
    <i class="rule second"></i>
    <div class="app"><svg viewBox="0 0 70 70"><path d="M14-8h20c10 0 12 6 14 10 8 0 15 4 15 14v50H14z" fill="#f4f4f4"/><path d="M7 0h24c9 1 12 5 13 12 8 1 13 5 19 15v46H7z" fill="#fff"/><path d="M31 0c6 5 4 10 5 17 9 0 20 2 27 10-3-12-10-18-18-19-3-5-8-8-14-8z" fill="#dedede"/><rect x="19" y="27" width="33" height="35" rx="2" fill="#b3c0c4"/><rect x="24" y="28.500" width="17" height="4" fill="#2b2f30"/><circle cx="35.500" cy="43.500" r="12.500" fill="#c0cbce" stroke="#93a0a4" stroke-width="1"/><circle cx="35.500" cy="43.500" r="3.500" fill="#d5dcde" stroke="#93a0a4"/><rect x="19" y="57" width="33" height="5" fill="#54595b"/><rect x="33" y="57" width="12" height="4" fill="#151718"/></svg></div>
    <div class="app"><svg viewBox="0 0 70 70"><path d="M5 5h60l-7.500 62c-.6 4-8 6-22.500 6s-22-2-22.500-6z" fill="url(#gBin)"/><ellipse cx="35" cy="5" rx="30" ry="7" fill="#55575a" stroke="#a0a2a4" stroke-width="1.400"/><path d="M9 5 13-4l9-2 6 3 6-3 6 5 5-5 8 4 5 2 3 6-8 4-12 3-12-1-10-1z" fill="#e8e8e6"/><path d="M15-2l6 9M28-3l-3 10 8 4M40-1l-4 9M52-2l-8 8 9 2" stroke="#6e6f73" stroke-width="1.700" fill="none"/><path d="M29 1l6 3-4 3z" fill="#40b5d8"/><path d="M42 3l7 1-4 6z" fill="#c9622f"/><path d="M20 5l5 2-3 3z" fill="#cf3f3f"/><path d="M47-1l4 3-3 2z" fill="#3d4fa8"/></svg></div>
  </footer>
</div>
</body>
</html>
```
FILE: styles.css
```css
* { box-sizing: border-box; }

body {
  margin: 0;
  font-family: Inter, "Noto Sans CJK KR", sans-serif;
  color: #000;
}

.defs { position: absolute; }

.desktop {
  position: relative;
  display: flex;
  flex-direction: column;
  width: 3024px;
  height: 1964px;
  overflow: hidden;
  background: linear-gradient(#b3aea2 0 200px, #000 1000px);
}

.wallpaper {
  position: absolute;
  left: 0;
  bottom: 0;
}

svg { display: block; flex: none; overflow: visible; }

/* menu bar */
.menubar {
  display: flex;
  height: 74px;
  background: linear-gradient(90deg, #f0efe9, #ecebe6 50%, #e4e1d9);
}

.menus {
  display: flex;
  align-items: center;
  gap: 41.3px;
  padding-left: 38px;
  font-size: 26px;
  font-weight: 500;
  letter-spacing: -1.6px;
  word-spacing: 2px;
  white-space: nowrap;
}

.menus span { line-height: 72px; }

.apple-logo {
  width: 32px;
  height: 32px;
  margin: 0 -3px 4px 0;
}

.menus .app-name {
  width: 100px;
  font-weight: 700;
  letter-spacing: -.1px;
}

.status {
  display: flex;
  align-items: center;
  gap: 37.4px;
  width: 964px;
  margin-left: auto;
  white-space: nowrap;
}

.ime {
  width: 44px;
  height: 32px;
  border-radius: 5px;
  background: #232321;
  color: #fff;
  font-size: 23px;
  font-weight: 500;
  line-height: 31px;
  text-align: center;
}

.clock {
  color: #232321;
  font-size: 26px;
  font-weight: 400;
  letter-spacing: .35px;
  word-spacing: 1.5px;
  line-height: 70px;
}

.t-zm { font: 700 15px Inter, sans-serif; fill: #fff; }
.t-n { font: 700 25px "Liberation Serif", serif; fill: #232321; }
.t-v { font: italic 700 30px "Liberation Serif", serif; fill: #fff; }
.t-z { font: 900 17px Inter, sans-serif; fill: #fff; }
.t-blog { font: 700 9px Inter, sans-serif; fill: #fff; }
.t-month { font: 500 15px Inter, "Noto Sans CJK KR", sans-serif; fill: #fff; letter-spacing: -1px; }
.t-day { font: 300 41px Inter, sans-serif; fill: #2b2b2d; letter-spacing: -2px; }
.t-notion { font: 700 43px "Liberation Serif", serif; fill: #000; }
.t-talk { font: 700 17px Inter, sans-serif; fill: #f7e14b; letter-spacing: -1px; }
.t-tv { font: 500 29px Inter, sans-serif; fill: #fff; letter-spacing: -.5px; }
.t-ga { font: 400 38px "Noto Sans CJK KR", sans-serif; fill: #fff; }
.t-zoom { font: 500 20.500px Inter, sans-serif; fill: #fff; letter-spacing: -1px; }

/* browser window */
.window {
  position: relative;
  display: flex;
  flex-direction: column;
  height: 1768px;
  margin-top: 2px;
  border-radius: 20px;
  overflow: hidden;
  background: #8dabe5;
  flex: none;
  clip-path: inset(0 round 20px);
}

.window::before {
  content: "";
  position: absolute;
  inset: 0;
  border-radius: 20px;
  box-shadow: inset 0 2px 0 #b2c6ee;
}

.desktop::before {
  content: "";
  position: absolute;
  top: 75px;
  left: 0;
  width: 3024px;
  height: 40px;
  border-top: 1px solid #000;
  border-radius: 20px;
}

.tabstrip {
  display: flex;
  position: relative;
  height: 80px;
  flex: none;
}

.lights {
  display: flex;
  gap: 16px;
  width: 178px;
  padding: 29px 0 0 42px;
}

.lights i { width: 24px; height: 24px; border-radius: 50%; }
.red { background: #ed6b60; }
.yellow { background: #f5bf4f; }
.green { background: #62c655; }

.tab {
  position: relative;
  display: flex;
  gap: 16px;
  width: 144px;
  padding: 24px 0 0 22px;
}

.tab.wide { width: 146px; }
.tab > svg { width: 32px; height: 32px; }

.tab > span {
  width: 54px;
  height: 36px;
  overflow: hidden;
  color: #1f2023;
  font-size: 24px;
  letter-spacing: -1px;
  line-height: 32px;
  white-space: nowrap;
  -webkit-mask-image: linear-gradient(90deg, #000 65%, transparent);
  mask-image: linear-gradient(90deg, #000 65%, transparent);
}

.tab::after {
  content: "";
  position: absolute;
  right: -2px;
  top: 25px;
  width: 4px;
  height: 32px;
  border-radius: 2px;
  background: #cfdcf5;
}

.tab.last::after { display: none; }

.tab.active {
  gap: 0;
  padding: 25px 0 0 23px;
}

.tab.active::before {
  content: "";
  position: absolute;
  left: 6px;
  top: 12px;
  width: 134px;
  height: 68px;
  border-radius: 20px 20px 0 0;
  background: #cfdcf5;
}

/* outward curves at the foot of the selected tab */
.tab.active::after {
  right: auto;
  left: -18px;
  top: 56px;
  width: 182px;
  height: 24px;
  border-radius: 0;
  background:
    radial-gradient(circle at 0 0, transparent 23.5px, #cfdcf5 24px) left / 24px 24px no-repeat,
    radial-gradient(circle at 100% 0, transparent 23.5px, #cfdcf5 24px) right / 24px 24px no-repeat;
}

.tab.active > * { position: relative; z-index: 1; }
.tab.active > .globe { width: 30px; height: 30px; }
.tab.active > span { width: 5px; margin: -2px 26px 0 17px; font-size: 22px; -webkit-mask-image: none; mask-image: none; }
.tab.active > .close { width: 18px; height: 18px; margin: 6px 0 0 -2px; }

.plus { width: 20px; height: 20px; margin: 30px 0 0 24px; }

.tab-search {
  display: flex;
  align-items: center;
  justify-content: center;
  width: 56px;
  height: 56px;
  margin: 12px 12px 0 auto;
  border-radius: 20px;
  background: #cfdcf5;
}

.toolbar {
  position: relative;
  display: flex;
  align-items: center;
  height: 94px;
  padding: 0 41px 0 31px;
  flex: none;
  border-bottom: 2px solid #a8b3cb;
  border-radius: 20px 20px 0 0;
  background: #cfdcf5;
}

.ic-fwd { margin-left: 46px; }
.ic-reload { margin-left: 46px; }

.omnibox {
  display: flex;
  align-items: center;
  width: 2368px;
  height: 72px;
  margin-left: 37px;
  padding: 0 30px 0 8px;
  border: 4px solid #6f7d9c;
  border-radius: 36px;
  background: #fff;
}

.chip {
  display: flex;
  align-items: center;
  gap: 10px;
  width: 106px;
  height: 48px;
  padding-left: 11px;
  border-radius: 24px;
  background: #cfdcf5;
  color: #1f2023;
  font-size: 24px;
  letter-spacing: -1.4px;
  line-height: 44px;
  white-space: nowrap;
}

.url {
  margin-left: 15px;
  color: #1f2023;
  font-size: 28px;
  letter-spacing: -.1px;
  white-space: nowrap;
}

.star { margin-left: auto; }

.extensions {
  display: flex;
  align-items: center;
  margin-left: 36px;
}

.ext-v { margin-left: 42px; }
.ext-puzzle { margin: -4px 0 0 40px; }
.extensions .divider { margin-left: 34px; }
.avatar { margin-left: 32px; }
.dots { margin-left: 49px; }

.divider { width: 4px; height: 32px; border-radius: 2px; background: #8dabe5; }

/* web page */
.page {
  position: relative;
  flex: 1;
  overflow: hidden;
  background: #f0f8ff;
  font-family: "Noto Sans CJK KR", sans-serif;
}

.card {
  width: 2423px;
  height: 1598px;
  margin: 0 auto;
  padding-left: 48px;
  border: 2px solid #ababab;
  border-radius: 20px;
  background: #fff;
  font-size: 32px;
  line-height: 39px;
  letter-spacing: -2px;
  word-spacing: 2.3px;
}

.card h1 {
  margin: 35px 0 0 -51px;
  font-size: 64px;
  line-height: 76px;
  letter-spacing: -3.5px;
  text-align: center;
}

.card ul { margin: 0; padding: 0; list-style: none; }
.card .outer { margin-top: 243px; }
.outer > li { position: relative; margin-bottom: 39px; padding-left: 111px; }
.card p { margin: 0 0 32px; }

.outer > li::before {
  content: "";
  position: absolute;
  left: 5px;
  top: 17px;
  width: 11px;
  height: 11px;
  border-radius: 50%;
  background: #000;
}

.inner li { position: relative; }
.inner .mbti { letter-spacing: -1.75px; }

.inner li::before {
  content: "";
  position: absolute;
  left: -28px;
  top: 16px;
  width: 12px;
  height: 12px;
  border: 1.5px solid #333;
  border-radius: 50%;
}

.dock-shade {
  position: absolute;
  left: 0;
  right: 0;
  bottom: 0;
  height: 76px;
  background: linear-gradient(transparent, rgba(0, 0, 0, .125));
  -webkit-mask-image: linear-gradient(90deg, transparent 20px, #000 240px, #000 2784px, transparent 3004px);
  mask-image: linear-gradient(90deg, transparent 20px, #000 240px, #000 2784px, transparent 3004px);
}

/* dock */
.dock {
  position: relative;
  display: flex;
  gap: 20px;
  width: 2878px;
  height: 108px;
  margin: 2px 0 0 73px;
  padding: 14px 0 0 13px;
  border: 2px solid #504a3a;
  border-radius: 32px;
  background: linear-gradient(90deg, #2e2813, #3b2914 20%, #20211a 33%, #1d2118 48%, #2a2116 58%, #2e2113 75%, #372313 80%, #2d2714 88%, #302c18);
  flex: none;
}

.app { position: relative; width: 70px; height: 70px; flex: none; }
.app:nth-child(n + 2) { margin-left: -.07px; }
.app > svg { width: 70px; height: 70px; }

.app.on::after {
  content: "";
  position: absolute;
  left: 31px;
  top: 80px;
  width: 8px;
  height: 8px;
  border-radius: 50%;
  background: #a9a395;
}

.petals rect { mix-blend-mode: multiply; opacity: .88; }

.rule { width: 2px; height: 80px; margin-top: -2px; background: #655a48; flex: none; }
.rule.first { margin-left: 9px; margin-right: 8px; }
.rule.second { margin-left: 10px; margin-right: 8px; }
```
